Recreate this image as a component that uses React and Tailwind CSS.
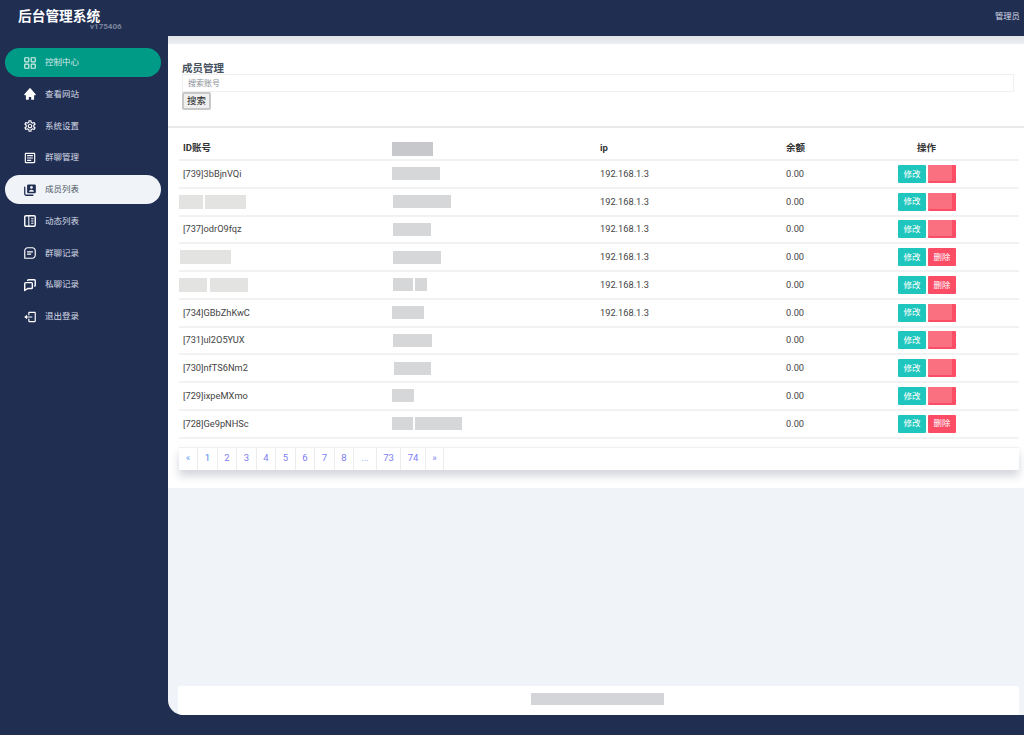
import React from "react";
import { BiSolidHome, BiMessageSquareDetail, BiLogOut } from "react-icons/bi";
import { LayoutGrid } from "lucide-react";
import { MdOutlineArticle, MdOutlineSettings } from "react-icons/md";

const MembersIcon = ({ className }) => (
  <svg viewBox="0 0 24 24" fill="none" className={className}>
    <path d="M3 7v12a2 2 0 0 0 2 2h12" stroke="currentColor" strokeWidth="2.2" strokeLinecap="round" />
    <rect x="7" y="2.5" width="15" height="15" rx="2" fill="currentColor" />
    <circle cx="14.5" cy="7.6" r="2.3" fill="#f0f4f8" />
    <path d="M10.2 15c0-2.4 2.2-3.6 4.3-3.6s4.3 1.2 4.3 3.6z" fill="#f0f4f8" />
  </svg>
);

const FeedIcon = ({ className }) => (
  <svg viewBox="0 0 24 24" fill="none" stroke="currentColor" strokeWidth="2.4" className={className}>
    <rect x="3" y="3" width="18" height="18" rx="2" />
    <path d="M10 3v18M14 8h4M14 12h4M14 16h4" strokeWidth="1.8" />
  </svg>
);

const ChatsIcon = ({ className }) => (
  <svg viewBox="0 0 24 24" fill="none" stroke="currentColor" strokeWidth="2.4" strokeLinejoin="round" className={className}>
    <path d="M8 5V4.500a1.500 1.500 0 0 1 1.500-1.500h10a1.500 1.500 0 0 1 1.500 1.500v8a1.500 1.500 0 0 1-1.500 1.500H19" />
    <path d="M3 9.500a1.500 1.500 0 0 1 1.500-1.500h10a1.500 1.500 0 0 1 1.500 1.500v7a1.500 1.500 0 0 1-1.500 1.500H8l-5 3.500z" />
  </svg>
);

const menu = [
  { label: "控制中心", Icon: LayoutGrid, state: "green" },
  { label: "查看网站", Icon: BiSolidHome },
  { label: "系统设置", Icon: MdOutlineSettings },
  { label: "群聊管理", Icon: MdOutlineArticle },
  { label: "成员列表", Icon: MembersIcon, state: "active" },
  { label: "动态列表", Icon: FeedIcon },
  { label: "群聊记录", Icon: BiMessageSquareDetail },
  { label: "私聊记录", Icon: ChatsIcon },
  { label: "退出登录", Icon: BiLogOut },
];

// blurred-out values are kept as grey bars: [width, gap before]
const rows = [
  { id: "[739]3bBjnVQi", name: [48], ip: "192.168.1.3", covered: true },
  { id: null, idBars: [[24, 0], [41, 2]], name: [58], nameLeft: 1, ip: "192.168.1.3", covered: true },
  { id: "[737]odrO9fqz", name: [38], nameLeft: 1, ip: "192.168.1.3", covered: true },
  { id: null, idBars: [[51, 1]], name: [48], nameLeft: 1, ip: "192.168.1.3" },
  { id: null, idBars: [[28, 0], [38, 3]], name: [20, 12], nameLeft: 1, ip: "192.168.1.3" },
  { id: "[734]GBbZhKwC", name: [32], ip: "192.168.1.3", covered: true },
  { id: "[731]ul2O5YUX", name: [39], nameLeft: 1, ip: "", covered: true },
  { id: "[730]nfTS6Nm2", name: [37], nameLeft: 2, ip: "", covered: true },
  { id: "[729]ixpeMXmo", name: [22], ip: "", covered: true },
  { id: "[728]Ge9pNHSc", name: [21, 47], ip: "" },
];

const pages = [
  { t: "«", w: "w-[19px]", c: "text-[#6aa5f8]" },
  { t: "1", w: "w-[20px]", c: "text-[#3f8cf0]" },
  { t: "2", w: "w-[19px]" },
  { t: "3", w: "w-[20px]" },
  { t: "4", w: "w-[19px]" },
  { t: "5", w: "w-[20px]" },
  { t: "6", w: "w-[19px]" },
  { t: "7", w: "w-[20px]" },
  { t: "8", w: "w-[19px]" },
  { t: "...", w: "w-[23px]", c: "text-[#6aa5f8]" },
  { t: "73", w: "w-[24px]" },
  { t: "74", w: "w-[25px]" },
  { t: "»", w: "w-[18px]" },
];

const gridCols = "grid grid-cols-[209px_208px_186px_52px_1fr] items-center";

const Bar = ({ w, ml = 0, h = "h-[13px]", color = "bg-[#d6d7d9]" }) => (
  <span className={`${h} ${color} block shrink-0 blur-[0.4px]`} style={{ width: w, marginLeft: ml }} />
);

const Row = ({ row }) => (
  <div className={`${gridCols} h-[27.75px] border-b-2 border-[#f0f2f4] text-[9.25px] text-[#444]`}>
    <div className="flex items-center pl-1">
      {row.id ? (
        row.id
      ) : (
        <div className="flex -ml-1">
          {row.idBars.map(([w, gap], i) => (
            <Bar key={i} w={w} ml={gap} h="h-[14px]" color="bg-[#e3e3e2]" />
          ))}
        </div>
      )}
    </div>
    <div className="flex items-center pl-1" style={{ paddingLeft: 4 + (row.nameLeft || 0) }}>
      {row.name.map((w, i) => (
        <Bar key={i} w={w} ml={i ? 2 : 0} />
      ))}
    </div>
    <div className="pl-1">{row.ip}</div>
    <div className="pl-1">0.00</div>
    <div className="flex justify-center gap-[2px] pl-[1px] text-[8.5px] text-white">
      <button className="w-[28px] h-[18px] rounded-[1px] bg-[#1fc6bd]">修改</button>
      <button className="relative w-[28px] h-[18px] rounded-[1px] bg-[#fb4d66]">
        {row.covered ? (
          <span className="absolute left-0 top-0 w-[24px] h-[16px] bg-[#fb7080]" />
        ) : (
          "删除"
        )}
      </button>
    </div>
  </div>
);

export default function App() {
  return (
    <div
      className="h-[735px] w-[1024px] overflow-hidden bg-[#202e52] flex flex-col"
      style={{ fontFamily: 'Roboto, "Noto Sans CJK SC", sans-serif' }}
    >
      {/* Top bar */}
      <header className="h-[36px] shrink-0 flex justify-between pl-[18px] pr-[4px] text-white">
        <div className="relative">
          <h1 className="pt-[7px] text-[13.7px] leading-[18px] font-bold">后台管理系统</h1>
          <span className="absolute left-[72px] top-[21px] text-[8px] font-bold text-[#7b859c]">v175406</span>
        </div>
        <span className="pt-[10px] text-[8.4px] leading-[12px] text-[#d5dae5]">管理员</span>
      </header>

      <div className="flex flex-1 min-h-0">
        {/* Sidebar */}
        <aside className="w-[168px] shrink-0 pt-[12px] pl-[5px] pr-[7px]">
          <ul className="flex flex-col gap-[2.75px]">
            {menu.map(({ label, Icon, state }) => (
              <li
                key={label}
                className={`h-[29px] flex items-center pl-[17.500px] rounded-full text-[8.5px] ${
                  state === "green"
                    ? "bg-[#009b86] text-[#d8e8e6]"
                    : state === "active"
                    ? "bg-[#f0f4f8] text-[#4b5563]"
                    : "text-[#d5dae5]"
                }`}
              >
                <Icon
                  className={`w-[14px] h-[14px] shrink-0 ${
                    state === "active" ? "text-[#202e52]" : state === "green" ? "text-[#d8efe9]" : "text-white"
                  }`}
                />
                <span className="ml-[8.500px]">{label}</span>
              </li>
            ))}
          </ul>
        </aside>

        {/* Main */}
        <main className="flex-1 mb-[20px] rounded-bl-[15px] bg-[#f0f4f8] flex flex-col overflow-hidden">
          <div className="h-[8px] shrink-0 bg-gradient-to-b from-[#dfe3e8] to-[#eceff3]" />

          <section className="h-[84px] shrink-0 bg-white border-b-2 border-[#e9e9e9] pt-[19px] pl-[14px] pr-[10px]">
            <h2 className="text-[10.5px] leading-[11px] font-bold text-[#46525f]">成员管理</h2>
            <input
              placeholder="搜索账号"
              className="block w-full h-[18px] pl-[5px] border border-[#efefef] text-[8px] placeholder:text-[#8a8f96] outline-none"
            />
            <button className="block w-[29px] h-[18px] bg-[#efefef] border-2 border-[#c8c8c8] rounded-[2px] text-[9.5px] text-[#222]">
              搜索
            </button>
          </section>

          <section className="h-[360px] shrink-0 bg-white pl-[11px] pr-[5px]">
            <div className={`${gridCols} h-[33px] pt-[10px] border-b-2 border-[#f0f2f4] text-[9.5px] font-bold text-[#333]`}>
              <div className="pl-1">ID账号</div>
              <div className="pl-1">
                <Bar w={41} h="h-[14px]" color="bg-[#c6c8cb]" />
              </div>
              <div className="pl-1">ip</div>
              <div className="pl-1">余额</div>
              <div className="text-center">操作</div>
            </div>

            {rows.map((row, i) => (
              <Row key={i} row={row} />
            ))}

            <ul className="mt-[8px] flex h-[23px] border-t border-[#f0f0f0] shadow-[0_6px_8px_rgba(60,70,100,0.22)] text-[9.5px] text-[#7d7df5]">
              {pages.map((p, i) => (
                <li
                  key={i}
                  className={`${p.w} ${p.c || ""} flex items-center justify-center border-r border-[#ececec]`}
                >
                  {p.t}
                </li>
              ))}
            </ul>
          </section>

          <div className="flex-1" />

          <footer className="h-[29px] shrink-0 ml-[10px] mr-[5px] pb-[3px] pr-[2px] rounded-t-[2px] bg-white flex items-center justify-center">
            <Bar w={133} h="h-[12px]" color="bg-[#d4d5d9]" />
          </footer>
        </main>
      </div>
    </div>
  );
}
